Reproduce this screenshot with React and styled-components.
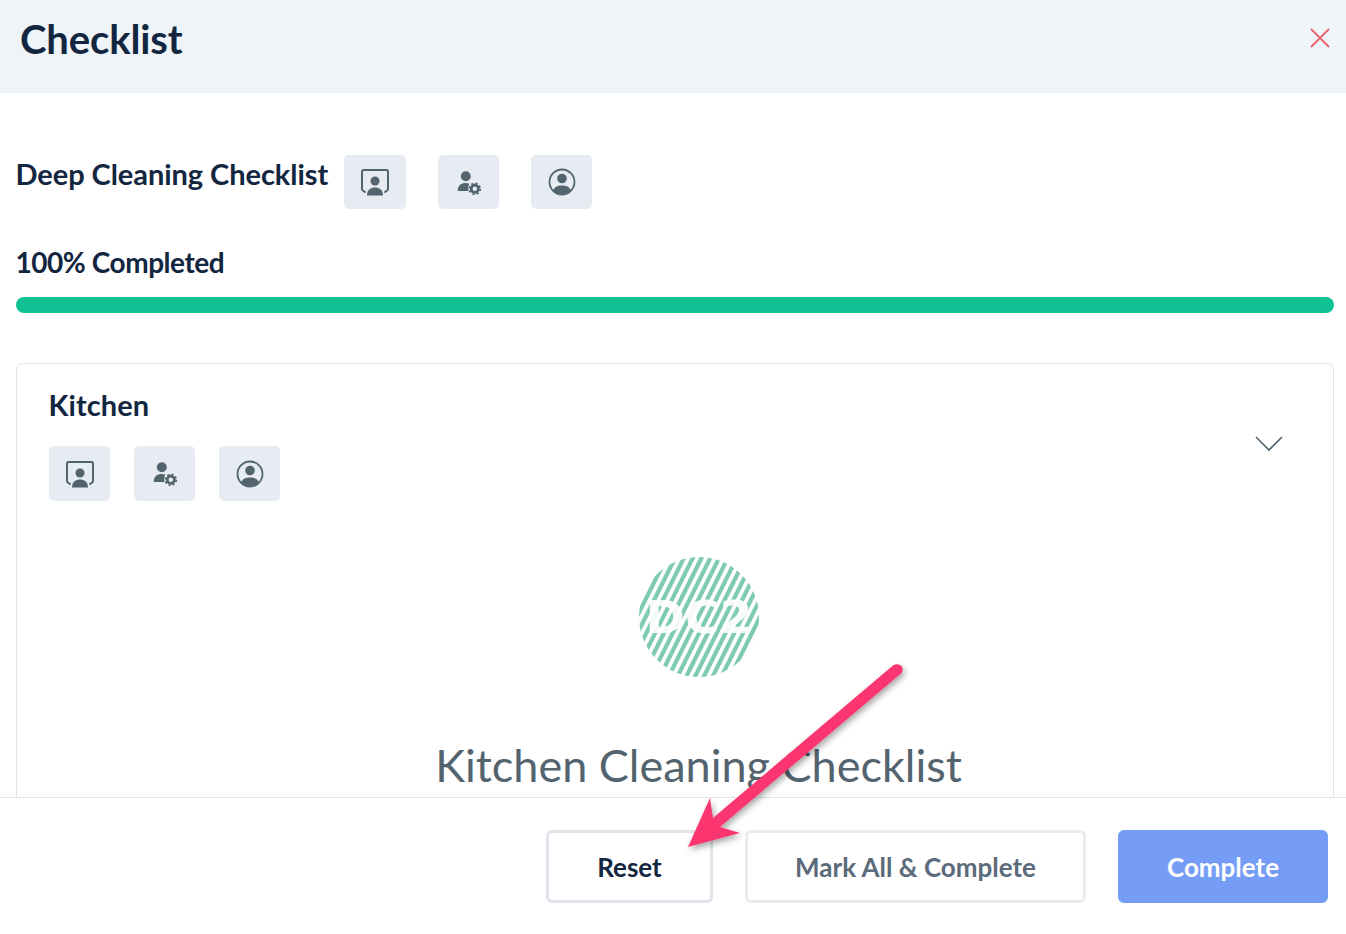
import React from "react";
import styled, { createGlobalStyle } from "styled-components";

const Global = createGlobalStyle`
  html, body { margin: 0; padding: 0; background: #fff; }
  * { box-sizing: border-box; }
  body { font-family: Lato, "Open Sans", sans-serif; color: #12263f; }
`;
const Page = styled.div`
  position: relative; width: 1346px; height: 934px; overflow: hidden;
  display: flex; flex-direction: column; background: #fff;
`;
const Header = styled.header`
  height: 93px; flex: none; background: #eff4f9; display: flex; align-items: flex-start;
  justify-content: space-between; padding: 15px 14px 0 20px;
`;
const Title = styled.h1`
  margin: 0; font-size: 40px; line-height: 48px; font-weight: 700; color: #12263f; letter-spacing: -0.12px;
`;
const Close = styled.button`
  border: 0; background: none; padding: 0; width: 24px; height: 24px; margin-top: 11px; display: flex;
  svg { display: block; }
`;
const Main = styled.main`
  flex: 1; min-height: 0; overflow: hidden; padding: 62px 12px 0 16px;
`;
const PlanRow = styled.div`
  display: flex; align-items: flex-start; height: 54px;
`;
const PlanTitle = styled.h2`
  margin: -1px 16px 0 -0.5px; font-size: 29px; line-height: 40px; font-weight: 700; color: #12263f; letter-spacing: -0.06px;
`;
const IconTile = styled.div`
  width: ${p => p.$w || 61}px; height: ${p => p.$h || 54}px; margin-right: ${p => p.$gap || 0}px; border-radius: 5px; background: #e6ecf2;
  display: flex; align-items: center; justify-content: center; flex: none;
`;
const ProgressLabel = styled.div`
  margin: 34px 0 0 -0.5px; font-size: 28px; line-height: 38px; font-weight: 700; color: #12263f; letter-spacing: -0.45px;
`;
const Track = styled.div`
  margin-top: 16px; height: 16px; border-radius: 8px; background: #10c193;
`;
const Card = styled.section`
  position: relative; margin-top: 50px; height: 500px; border: 1px solid #e3e7ec; border-radius: 6px; padding: 21px 32px 0 32px;
`;
const CardTitle = styled.h3`
  margin: 0 0 0 -0.5px; font-size: 29px; line-height: 40px; font-weight: 700; color: #12263f; letter-spacing: 0.1px;
`;
const TileRow = styled.div`
  display: flex; margin-top: 21px; gap: 24px;
`;
const Chevron = styled.div`
  position: absolute; right: 50px; top: 72px; svg { display: block; }
`;
const Intro = styled.div`
  padding-left: 47px;
`;
const Logo = styled.div`
  margin: 56px auto 0; width: 120px; height: 122px; svg { display: block; }
`;
const Heading = styled.div`
  margin-top: 53px; text-align: center; font-size: 45px; line-height: 66px; font-weight: 400; color: #53646f;
`;
const Footer = styled.footer`
  height: 137px; flex: none; border-top: 1px solid #e1e4e8; background: #fff; display: flex; justify-content: flex-end;
  align-items: flex-start; padding: 32px 18px 0 0; gap: 32px;
`;
const Btn = styled.button`
  height: 73px; width: ${p => p.$w}px; border-radius: 6px; font-family: inherit; font-size: 26px; font-weight: 700;
  border: 3px solid ${p => p.$border}; background: ${p => p.$bg || "#fff"}; color: ${p => p.$color}; padding: 0;
`;
const Arrow = styled.svg`
  position: absolute; left: 670px; top: 650px; pointer-events: none;
`;

const stroke = "#53646f";
const Board = () => (
  <svg width="30" height="30" viewBox="0 0 30 30" fill="none">
    <path d="M5 25 L3.500 24 Q2 23.500 2 22 V4.500 Q2 3 3.500 3 H26.500 Q28 3 28 4.500 V22 Q28 23.500 26.500 24 L25 25" stroke={stroke} strokeWidth="2" strokeLinecap="round" />
    <circle cx="15" cy="14" r="4.500" fill={stroke} />
    <path d="M7 28.500 C7 22.500 11 20.500 15 20.500 C19 20.500 23 22.500 23 28.500 Z" fill={stroke} />
  </svg>
);
const UserGear = () => (
  <svg width="27" height="27" viewBox="0 0 30 30" fill="none">
    <circle cx="12" cy="8" r="5.500" fill={stroke} />
    <path d="M3 24.500 C3 18 7 15.500 12 15.500 C13.500 15.500 15 15.800 16.200 16.300 C14.500 18.500 14 21.500 15.300 24.500 Z" fill={stroke} />
    <circle cx="22" cy="22" r="4" stroke={stroke} strokeWidth="3" />
    <circle cx="22" cy="22" r="6" stroke={stroke} strokeWidth="2" strokeDasharray="2.400 2.300" />
  </svg>
);
const UserCircle = () => (
  <svg width="30" height="30" viewBox="0 0 30 30" fill="none">
    <circle cx="15" cy="15" r="12.500" stroke={stroke} strokeWidth="1.800" />
    <circle cx="15" cy="11.500" r="4.800" fill={stroke} />
    <path d="M6 23.800 C7.500 19.500 11 18.500 15 18.500 C19 18.500 22.500 19.500 24 23.800 C22 26 18.500 27 15 27 C11.500 27 8 26 6 23.800 Z" fill={stroke} />
  </svg>
);
const stripes = Array.from({ length: 32 }, (_, i) => -90 + i * 8.8);

export default function App() {
  return (
    <Page>
      <Global />
      <Header>
        <Title>Checklist</Title>
        <Close aria-label="Close">
          <svg width="24" height="24" viewBox="0 0 24 24"><path d="M3 3 L21 21 M21 3 L3 21" stroke="#e8636b" strokeWidth="1.800" /></svg>
        </Close>
      </Header>
      <Main>
        <PlanRow>
          <PlanTitle>Deep Cleaning Checklist</PlanTitle>
          <IconTile $w={62} $gap={32}><Board /></IconTile>
          <IconTile $gap={32}><UserGear /></IconTile>
          <IconTile><UserCircle /></IconTile>
        </PlanRow>
        <ProgressLabel>100% Completed</ProgressLabel>
        <Track />
        <Card>
          <CardTitle>Kitchen</CardTitle>
          <TileRow>
            <IconTile $h={55}><Board /></IconTile>
            <IconTile $h={55}><UserGear /></IconTile>
            <IconTile $h={55}><UserCircle /></IconTile>
          </TileRow>
          <Chevron>
            <svg width="28" height="16" viewBox="0 0 28 16" fill="none"><path d="M1 1 L14 14 L27 1" stroke="#53646f" strokeWidth="1.600" /></svg>
          </Chevron>
          <Intro>
            <Logo>
              <svg width="120" height="122" viewBox="0 0 120 122">
                <defs><clipPath id="disc"><ellipse cx="60" cy="60" rx="60" ry="60" /></clipPath></defs>
                <g clipPath="url(#disc)">
                  {stripes.map(x => <path key={x} d={`M${x} 130 L${x + 70} -10`} stroke="#7fcbae" strokeWidth="4.200" />)}
                </g>
                <text x="60" y="76" textAnchor="middle" fontFamily="'DejaVu Sans', sans-serif" fontSize="44" fontWeight="700" fill="#fff" textLength="107" lengthAdjust="spacingAndGlyphs" opacity="0.92">DC2</text>
              </svg>
            </Logo>
            <Heading>Kitchen Cleaning Checklist</Heading>
          </Intro>
        </Card>
      </Main>
      <Footer>
        <Btn $w={167} $border="#e1e4ea" $color="#12263f">Reset</Btn>
        <Btn $w={341} $border="#e9ebf0" $color="#5b6b7b">Mark All &amp; Complete</Btn>
        <Btn $w={210} $border="#769df5" $bg="#769df5" $color="#fff">Complete</Btn>
      </Footer>
      <Arrow width="250" height="210" viewBox="0 0 250 210">
        <defs>
          <filter id="sh" x="-20%" y="-20%" width="140%" height="140%"><feDropShadow dx="2" dy="3" stdDeviation="3" floodColor="#000" floodOpacity="0.35" /></filter>
        </defs>
        <path filter="url(#sh)" fill="#fb3570" d="M223 15.500 Q228 13 231.500 16 Q234 20 231 23.500 L50 177 L70 183 L18 197 L40 148 L43 168 Z" />
      </Arrow>
    </Page>
  );
}
